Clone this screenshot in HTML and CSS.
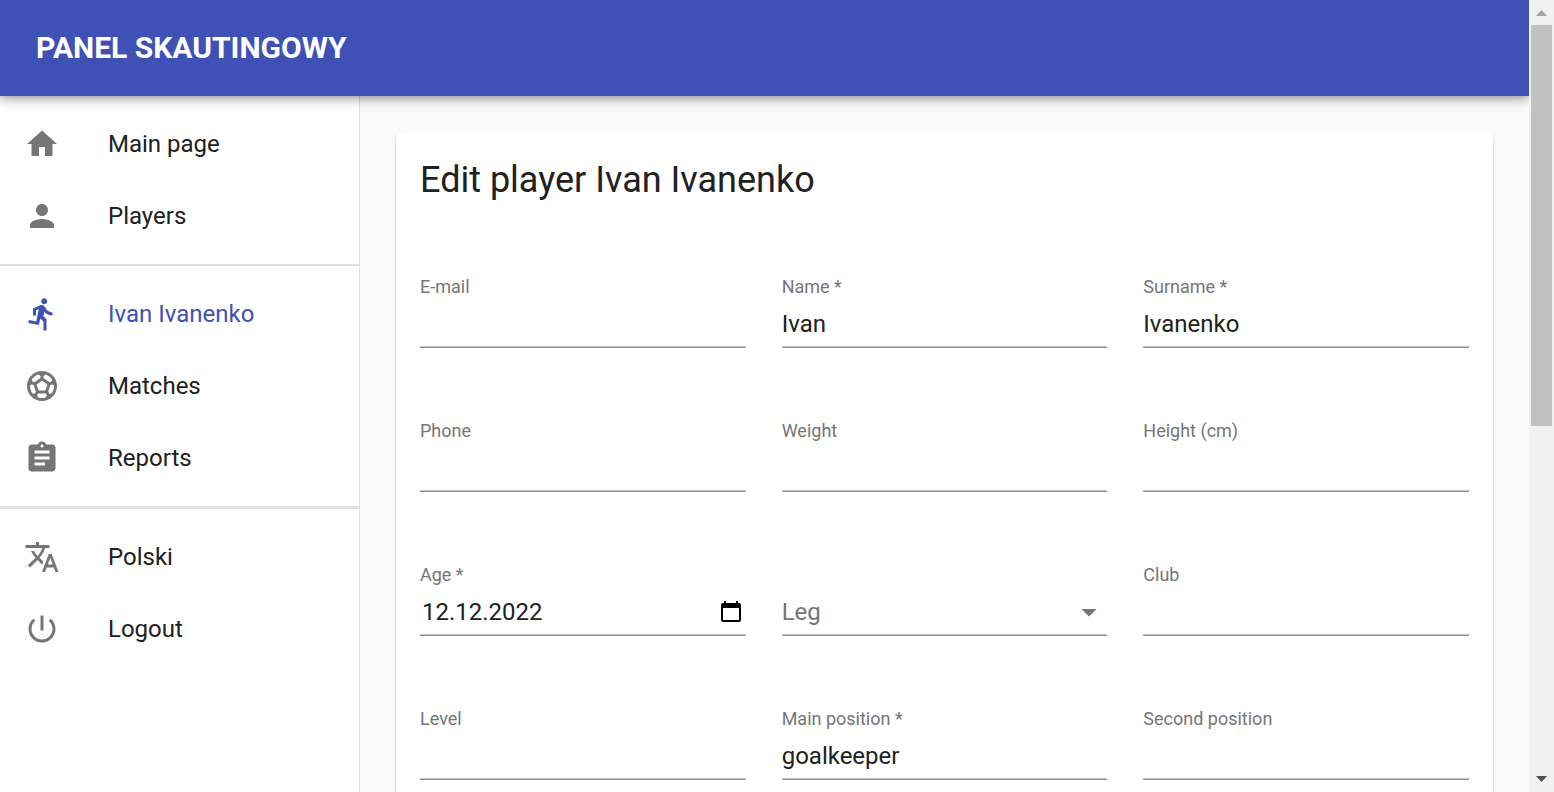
FILE: index.html
```html
<!DOCTYPE html>
<html lang="en">
<head>
<meta charset="utf-8">
<meta name="viewport" content="width=device-width, initial-scale=1">
<title>Panel skautingowy</title>
<link rel="stylesheet" href="styles.css">
</head>
<body>
<div class="window">
  <div class="app">
    <header class="app-bar">
      <a class="app-title" href="#">PANEL SKAUTINGOWY</a>
    </header>
    <div class="app-body">
      <nav class="sidebar">
        <ul class="nav-list">
          <li><a class="nav-item" href="#">
            <svg class="icon" viewBox="0 0 24 24"><path d="M10 20v-6h4v6h5v-8h3L12 3 2 12h3v8z"/></svg>
            <span>Main page</span></a></li>
          <li><a class="nav-item" href="#">
            <svg class="icon" viewBox="0 0 24 24"><path d="M12 12c2.210 0 4-1.790 4-4s-1.790-4-4-4-4 1.790-4 4 1.790 4 4 4zm0 2c-2.670 0-8 1.340-8 4v2h16v-2c0-2.660-5.330-4-8-4z"/></svg>
            <span>Players</span></a></li>
        </ul>
        <hr class="divider">
        <ul class="nav-list">
          <li><a class="nav-item nav-item-active" href="#">
            <svg class="icon" viewBox="0 0 24 24"><path d="M13.490 5.480c1.100 0 2-.9 2-2s-.9-2-2-2-2 .9-2 2 .9 2 2 2zm-3.600 13.900l1-4.400 2.100 2v6h2v-7.500l-2.100-2 .6-3c1.300 1.500 3.300 2.500 5.500 2.500v-2c-1.900 0-3.500-1-4.300-2.400l-1-1.600c-.4-.6-1-1-1.700-1-.3 0-.5.100-.8.100l-5.200 2.200v4.700h2v-3.400l1.800-.7-1.600 8.100-4.900-1-.4 2 7 1.400z"/></svg>
            <span>Ivan Ivanenko</span></a></li>
          <li><a class="nav-item" href="#">
            <svg class="icon" viewBox="0 0 24 24"><path d="M12 2C6.480 2 2 6.480 2 12s4.480 10 10 10 10-4.480 10-10S17.520 2 12 2zm1 3.300l1.350-.95c1.820.56 3.370 1.760 4.380 3.340l-.39 1.340-1.350.46L13 6.700V5.300zm-3.350-.95L11 5.300v1.400L7.010 9.490l-1.350-.46-.39-1.340c1.010-1.570 2.560-2.770 4.380-3.340zM7.080 17.110l-1.140.1C4.730 15.810 4 13.990 4 12c0-.12.010-.23.020-.35l1-.73 1.380.48 1.460 4.340-.78 1.370zm7.420 2.480c-.79.26-1.630.41-2.500.41s-1.710-.15-2.500-.41l-.69-1.490.64-1.100h5.110l.64 1.110-.7 1.480zM14.270 15H9.730l-1.350-4.020L12 8.440l3.630 2.540L14.270 15zm3.790 2.210l-1.140-.1-.79-1.370 1.460-4.340 1.390-.47 1 .73c.01.11.02.22.02.34 0 1.990-.73 3.810-1.940 5.210z"/></svg>
            <span>Matches</span></a></li>
          <li><a class="nav-item" href="#">
            <svg class="icon" viewBox="0 0 24 24"><path d="M19 3h-4.180C14.400 1.840 13.300 1 12 1c-1.300 0-2.400.84-2.820 2H5c-1.100 0-2 .9-2 2v14c0 1.100.9 2 2 2h14c1.100 0 2-.9 2-2V5c0-1.100-.9-2-2-2zm-7 0c.55 0 1 .45 1 1s-.45 1-1 1-1-.45-1-1 .45-1 1-1zm2 14H7v-2h7v2zm3-4H7v-2h10v2zm0-4H7V7h10v2z"/></svg>
            <span>Reports</span></a></li>
        </ul>
        <hr class="divider divider-thick">
        <ul class="nav-list">
          <li><a class="nav-item" href="#">
            <svg class="icon" viewBox="0 0 24 24"><path d="M12.870 15.070l-2.540-2.510.03-.03c1.740-1.940 2.980-4.170 3.710-6.530H17V4h-7V2H8v2H1v1.990h11.170C11.500 7.920 10.440 9.750 9 11.350 8.070 10.320 7.300 9.190 6.690 8h-2c.73 1.630 1.730 3.170 2.980 4.560l-5.090 5.020L4 19l5-5 3.110 3.110.76-2.040zM18.500 10h-2L12 22h2l1.120-3h4.750L21 22h2l-4.500-12zm-2.620 7l1.620-4.330L19.120 17h-3.240z"/></svg>
            <span>Polski</span></a></li>
          <li><a class="nav-item" href="#">
            <svg class="icon" viewBox="0 0 24 24"><path d="M13 3h-2v10h2V3zm4.830 2.170l-1.420 1.420C17.990 7.860 19 9.810 19 12c0 3.870-3.130 7-7 7s-7-3.130-7-7c0-2.190 1.010-4.140 2.580-5.420L6.170 5.170C4.230 6.820 3 9.260 3 12c0 4.970 4.030 9 9 9s9-4.030 9-9c0-2.740-1.230-5.180-3.170-6.830z"/></svg>
            <span>Logout</span></a></li>
        </ul>
      </nav>
      <main class="content">
        <section class="card">
          <h1 class="card-title">Edit player Ivan Ivanenko</h1>
          <form class="player-form">
            <div class="field">
              <label class="label" for="email">E-mail</label>
              <input class="control" id="email" type="email">
            </div>
            <div class="field">
              <label class="label" for="name">Name *</label>
              <input class="control" id="name" type="text" value="Ivan" required>
            </div>
            <div class="field">
              <label class="label" for="surname">Surname *</label>
              <input class="control" id="surname" type="text" value="Ivanenko" required>
            </div>
            <div class="field">
              <label class="label" for="phone">Phone</label>
              <input class="control" id="phone" type="tel">
            </div>
            <div class="field">
              <label class="label" for="weight">Weight</label>
              <input class="control" id="weight" type="text">
            </div>
            <div class="field">
              <label class="label" for="height">Height (cm)</label>
              <input class="control" id="height" type="text">
            </div>
            <div class="field">
              <label class="label" for="age">Age *</label>
              <div class="control control-group">
                <input class="date-input" id="age" type="text" value="12.12.2022" required>
                <button class="date-button" type="button" aria-label="Open calendar">
                  <svg class="calendar-icon" viewBox="0 0 20 21"><path fill-rule="evenodd" d="M3 0h2v2h10V0h2v2h1a2 2 0 0 1 2 2v15a2 2 0 0 1-2 2H2a2 2 0 0 1-2-2V4a2 2 0 0 1 2-2h1zM2 7v12h16V7z"/></svg>
                </button>
              </div>
            </div>
            <div class="field">
              <div class="select-wrap">
                <select class="control select" id="leg" aria-label="Leg">
                  <option>Leg</option>
                </select>
                <svg class="icon select-arrow" viewBox="0 0 24 24"><path d="M7 10l5 5 5-5z"/></svg>
              </div>
            </div>
            <div class="field">
              <label class="label" for="club">Club</label>
              <input class="control" id="club" type="text">
            </div>
            <div class="field">
              <label class="label" for="level">Level</label>
              <input class="control" id="level" type="text">
            </div>
            <div class="field">
              <label class="label" for="main-position">Main position *</label>
              <input class="control" id="main-position" type="text" value="goalkeeper" required>
            </div>
            <div class="field">
              <label class="label" for="second-position">Second position</label>
              <input class="control" id="second-position" type="text">
            </div>
          </form>
        </section>
      </main>
    </div>
  </div>
  <div class="scrollbar" aria-hidden="true">
    <svg class="scroll-arrow scroll-arrow-up" viewBox="0 0 25 25"><path d="M12.500 10l5.500 6H7z"/></svg>
    <div class="scroll-track"><div class="scroll-thumb"></div></div>
    <svg class="scroll-arrow" viewBox="0 0 25 25"><path d="M7 9h11l-5.500 6z"/></svg>
  </div>
</div>
</body>
</html>
```

FILE: styles.css
```css
* {
  box-sizing: border-box;
}

body {
  margin: 0;
  font-family: Roboto, "Liberation Sans", sans-serif;
  font-size: 24px;
  line-height: 36px;
  color: #212121;
  background: #fafafa;
}

.window {
  display: grid;
  grid-template-columns: minmax(0, 1fr) 25px;
  height: 100vh;
  overflow: hidden;
}

.app {
  display: flex;
  flex-direction: column;
  min-height: 0;
  overflow: hidden;
}

.app-bar {
  display: flex;
  flex: none;
  align-items: center;
  padding: 24px 36px;
  position: relative;
  z-index: 1;
  background: #3f51b5;
  box-shadow: 0 3px 6px -2px rgba(0, 0, 0, 0.2), 0 6px 8px 0 rgba(0, 0, 0, 0.14), 0 2px 15px 0 rgba(0, 0, 0, 0.12);
}

.app-title {
  font-size: 30px;
  line-height: 48px;
  font-weight: 700;
  color: #fff;
  text-decoration: none;
}

.app-body {
  display: grid;
  grid-template-columns: 360px minmax(0, 1fr);
  flex: 1;
  min-height: 0;
}

.sidebar {
  background: #fff;
  border-right: 1px solid #e0e0e0;
}

.nav-list {
  list-style: none;
  margin: 0;
  padding: 12px 0;
}

.nav-item {
  display: flex;
  align-items: center;
  gap: 48px;
  padding: 18px 24px;
  color: #212121;
  text-decoration: none;
}

.icon {
  display: block;
  flex: none;
  width: 36px;
  height: 36px;
  fill: #757575;
}

.nav-item-active {
  color: #3f51b5;
}

.nav-item-active .icon {
  fill: #3f51b5;
}

.divider {
  height: 2px;
  margin: 0;
  border: 0;
  background: #e0e0e0;
}

.divider-thick {
  height: 3px;
}

.content {
  padding: 36px;
}

.card {
  padding: 24px;
  background: #fff;
  border-radius: 6px;
  box-shadow: 0 3px 2px -2px rgba(0, 0, 0, 0.2), 0 2px 2px 0 rgba(0, 0, 0, 0.14), 0 2px 4px 0 rgba(0, 0, 0, 0.12);
}

.card-title {
  margin: 0 0 72px;
  font-size: 36px;
  line-height: 48px;
  font-weight: 400;
}

.player-form {
  display: grid;
  grid-template-columns: repeat(3, minmax(0, 1fr));
  gap: 70px 36px;
  margin-top: -2px;
}

.field {
  display: flex;
  flex-direction: column;
  justify-content: flex-end;
}

.label {
  font-size: 18px;
  line-height: 26px;
  color: #757575;
}

.control {
  display: block;
  width: 100%;
  height: 48px;
  margin: 0;
  padding: 0;
  border: 0;
  border-bottom: 1px solid #8e8e8e;
  border-radius: 0;
  outline: 0;
  background: transparent;
  box-shadow: inset 0 -1px #c4c4c4;
  font: inherit;
  color: #212121;
}

.control-group {
  display: flex;
  align-items: center;
  padding: 0 5px 0 2px;
}

.date-input {
  flex: 1;
  min-width: 0;
  padding: 0;
  border: 0;
  outline: 0;
  background: transparent;
  font: inherit;
  color: #212121;
}

.date-button {
  display: block;
  padding: 0;
  border: 0;
  background: transparent;
}

.calendar-icon {
  display: block;
  width: 20px;
  height: 21px;
}

.select-wrap {
  display: grid;
  align-items: center;
}

.select-wrap > * {
  grid-area: 1 / 1;
}

.select {
  appearance: none;
  color: #757575;
}

.select-arrow {
  justify-self: end;
  pointer-events: none;
}

.scrollbar {
  display: flex;
  flex-direction: column;
  min-height: 0;
  background: #f1f1f1;
}

.scroll-arrow {
  display: block;
  flex: none;
  width: 25px;
  height: 25px;
  fill: #505050;
}

.scroll-arrow-up {
  fill: #a3a3a3;
}

.scroll-track {
  flex: 1;
  padding: 0 2px;
}

.scroll-thumb {
  height: 54%;
  background: #c1c1c1;
}
```
